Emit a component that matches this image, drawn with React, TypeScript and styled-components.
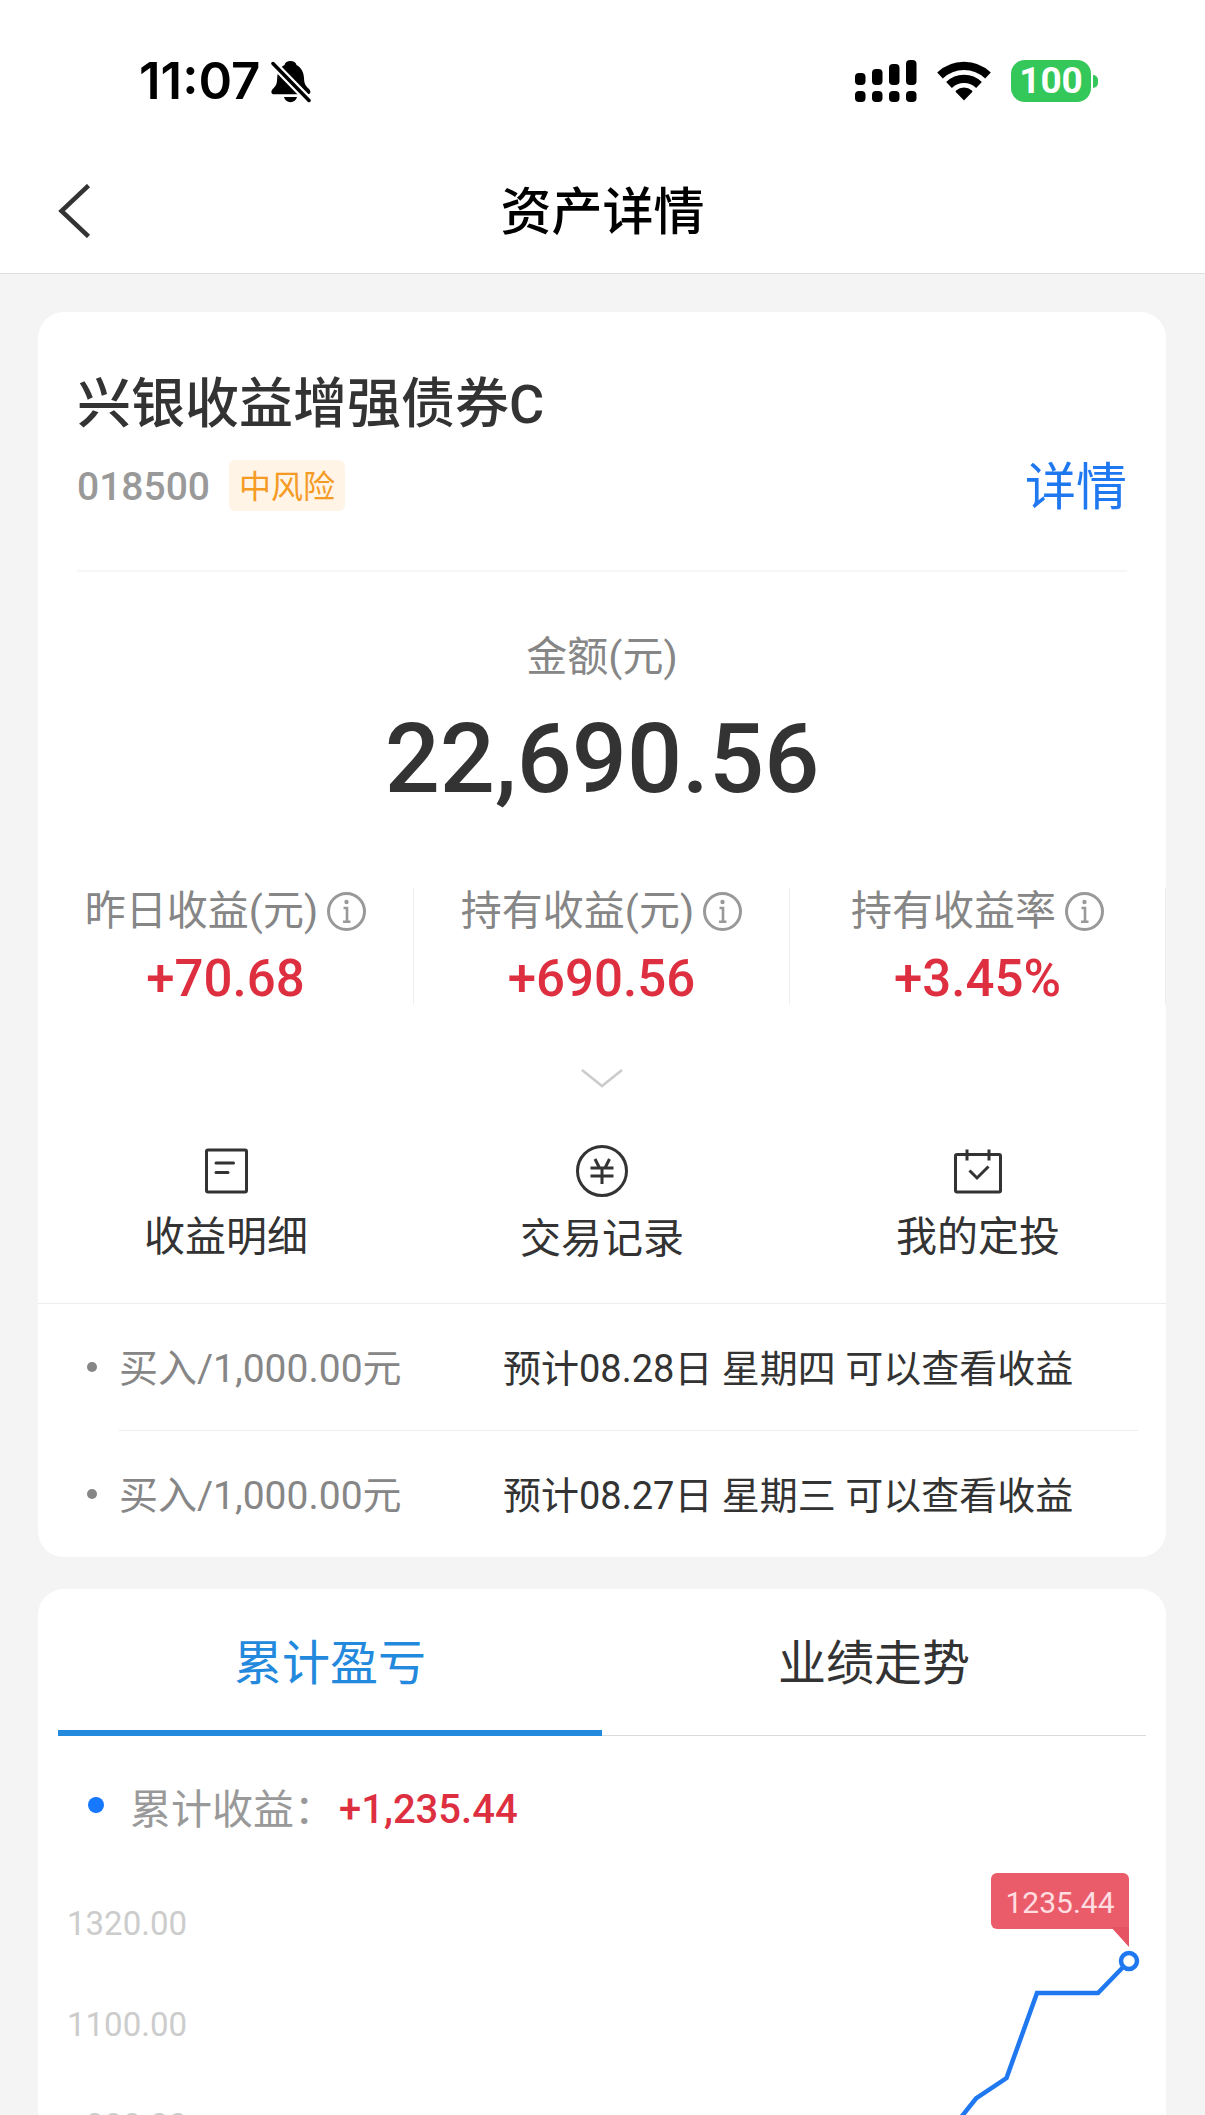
import React, { useState } from "react";
import styled, { createGlobalStyle } from "styled-components";

const color = {
  page: "#f4f4f4",
  card: "#ffffff",
  ink: "#333333",
  muted: "#868686",
  soft: "#999999",
  faint: "#cccccc",
  line: "#eeeeee",
  red: "#dd2f3f",
  blue: "#1f78f0",
  tab: "#2389dc",
};

const GlobalStyle = createGlobalStyle`
  *, *::before, *::after { box-sizing: border-box; }
  body {
    margin: 0;
    background: ${color.page};
    color: ${color.ink};
    font-family: Roboto, "Noto Sans CJK SC", sans-serif;
  }
  button {
    padding: 0;
    border: 0;
    background: none;
    color: inherit;
    font: inherit;
    cursor: pointer;
  }
  h1, h2, p, ul, dl, dd { margin: 0; padding: 0; }
  ul { list-style: none; }
  svg { display: block; flex: none; }
`;

const Screen = styled.div`
  display: flex;
  flex-direction: column;
  height: 100vh;
  overflow: hidden;
`;

/* ---------- top bars ---------- */

const TopBar = styled.header`
  flex: none;
  background: ${color.card};
  border-bottom: 1px solid #dedede;
`;

const StatusBar = styled.div`
  display: flex;
  align-items: center;
  justify-content: space-between;
  height: 162px;
  padding: 0 107px 0 139px;
  color: #000;
`;

const StatusGroup = styled.div<{ $gap: number }>`
  display: flex;
  align-items: center;
  gap: ${(p) => p.$gap}px;
`;

const Clock = styled.time`
  font-family: Inter, sans-serif;
  font-size: 51px;
  font-weight: 600;
  line-height: 60px;
`;

const Battery = styled.div`
  display: flex;
  align-items: center;
  gap: 2px;

  &::after {
    content: "";
    width: 5px;
    height: 13px;
    border-radius: 0 6px 6px 0;
    background: #34c759;
  }
`;

const BatteryLevel = styled.span`
  width: 80px;
  height: 42px;
  border-radius: 14px;
  background: #34c759;
  color: #fff;
  font-size: 37px;
  font-weight: 700;
  line-height: 42px;
  text-align: center;
`;

const NavBar = styled.nav`
  display: grid;
  grid-template-columns: 100px 1fr 100px;
  align-items: center;
  height: 111px;
  padding-bottom: 13px;
`;

const BackButton = styled.button`
  display: flex;
  && { padding-left: 57px; }
`;

const NavTitle = styled.h1`
  && { padding-top: 4px; }
  color: #000;
  font-size: 51px;
  font-weight: 500;
  line-height: 60px;
  text-align: center;
`;

/* ---------- cards ---------- */

const Content = styled.main`
  display: flex;
  flex: 1;
  flex-direction: column;
  gap: 32px;
  min-height: 0;
  padding: 38px 39px 0 38px;
`;

const Card = styled.section<{ $grow?: boolean }>`
  flex: ${(p) => (p.$grow ? "1 1 0" : "none")};
  min-height: 0;
  overflow: hidden;
  border-radius: ${(p) => (p.$grow ? "26px 26px 0 0" : "26px")};
  background: ${color.card};
`;

const FundHead = styled.div`
  margin: 0 39px;
  padding: 60px 0 59px;
  border-bottom: 2px solid #f6f6f6;
`;

const FundName = styled.h2`
  font-size: 54px;
  font-weight: 500;
  line-height: 66px;
`;

const FundMeta = styled.div`
  display: flex;
  align-items: center;
  margin-top: 22px;
  line-height: 47px;

  & > * { padding-top: 4px; }
`;

const FundCode = styled.span`
  color: ${color.soft};
  font-size: 39px;
  font-weight: 500;
`;

const RiskTag = styled.span`
  margin-left: 19px;
  padding-right: 10px;
  padding-left: 10px;
  border-radius: 6px;
  background: #fff4e6;
  color: #f59a23;
  font-size: 32px;
`;

const DetailLink = styled.a`
  margin-left: auto;
  color: ${color.blue};
  font-size: 51px;
  text-decoration: none;
`;

const Balance = styled.div`
  padding-top: 60px;
  text-align: center;
`;

const BalanceLabel = styled.p`
  color: ${color.muted};
  font-size: 41px;
  line-height: 50px;
`;

const BalanceValue = styled.p`
  && { margin-top: 22px; }
  font-size: 97px;
  font-weight: 500;
  line-height: 110px;
`;

const Stats = styled.dl`
  && { margin-top: 74px; }
  display: grid;
  grid-template-columns: repeat(3, 1fr);
`;

const Stat = styled.div`
  border-right: 1px solid ${color.line};
  text-align: center;
`;

const StatLabel = styled.dt`
  display: flex;
  align-items: center;
  justify-content: center;
  gap: 9px;
  padding-top: 1px;
  color: ${color.muted};
  font-size: 41px;
  line-height: 44px;
`;

const StatValue = styled.dd`
  && { margin-top: 20px; }
  color: ${color.red};
  font-size: 51px;
  font-weight: 500;
  line-height: 52px;
`;

const ExpandButton = styled.button`
  && {
    display: block;
    margin: 63px auto 57px;
  }
`;

const Actions = styled.div`
  display: grid;
  grid-template-columns: repeat(3, 1fr);
  align-items: start;
  padding-bottom: 39px;
  border-bottom: 1px solid ${color.line};
`;

const Action = styled.button`
  display: flex;
  flex-direction: column;
  align-items: center;
  gap: 17px;
  && {
    font-size: 41px;
    line-height: 50px;
  }
`;

const OrderItem = styled.li`
  display: flex;
  align-items: center;
  gap: 22px;
  padding: 0 28px 0 49px;

  &::before {
    content: "";
    width: 10px;
    height: 10px;
    border-radius: 50%;
    background: ${color.muted};
  }

  & + & > div { border-top: 1px solid ${color.line}; }
`;

const OrderBody = styled.div`
  display: grid;
  flex: 1;
  grid-template-columns: 384px 1fr;
  padding-top: 4px;
  line-height: 122px;
  white-space: nowrap;
`;

const OrderAmount = styled.span`
  color: ${color.muted};
  font-size: 39px;
`;

const OrderNote = styled.span`
  font-size: 38px;
`;

/* ---------- profit chart ---------- */

const Tabs = styled.div`
  display: grid;
  grid-template-columns: 1fr 1fr;
  margin: 0 20px;
`;

const Tab = styled.button<{ $active: boolean }>`
  && {
    padding: 42px 0 39px;
    color: ${(p) => (p.$active ? color.tab : color.ink)};
    font-size: 48px;
    line-height: 66px;
  }
  box-shadow: inset 0 ${(p) => (p.$active ? `-6px ${color.tab}` : "-1px #d8dcde")};
`;

const Legend = styled.p`
  display: flex;
  align-items: center;
  && { margin: 49px 0 30px 50px; }
  color: ${color.soft};
  font-size: 41px;
  line-height: 50px;

  &::before {
    content: "";
    width: 16px;
    height: 16px;
    margin: 0 26px 10px 0;
    border-radius: 50%;
    background: #1677ff;
  }
`;

const LegendValue = styled.strong`
  margin-left: 4px;
  color: ${color.red};
  font-size: 40px;
  font-weight: 500;
`;

const Chart = styled.div`
  display: grid;
  grid-template-columns: 149px 1fr;
  margin-right: 20px;
`;

const Axis = styled.ul`
  && { padding-top: 8px; }
  color: ${color.faint};
  font-size: 33px;
  line-height: 101px;
  text-align: right;
`;

const Plot = styled.div`
  position: relative;
`;

const Callout = styled.span`
  position: absolute;
  top: 8px;
  right: 17px;
  width: 138px;
  padding-top: 3px;
  border-radius: 6px 6px 0 6px;
  background: #eb5c6a;
  color: #ffdde0;
  font-size: 30px;
  line-height: 53px;
  text-align: center;

  &::after {
    content: "";
    position: absolute;
    top: 54px;
    right: 0;
    width: 18px;
    height: 20px;
    background: #e65362;
    clip-path: polygon(0 0, 100% 0, 100% 100%);
  }
`;

/* ---------- icons ---------- */

const BellOffIcon = () => (
  <svg width="40" height="43" viewBox="0 0 40 43" aria-hidden="true">
    <path
      d="M19.500 1c3.200 0 5.400 1.600 6 4 4.800 2.600 7.200 7 7.500 13 .2 5.200 1.200 7.400 4 10 1.600 1.500 2.400 2.600 2.400 4 0 1.700-1.200 2.300-3.400 2.300H3.400C1.300 34.300.4 33.500.4 32c0-1.500.8-2.500 2.300-4C5.400 25.400 6 23 6.200 18c.3-6 2.600-10.400 7.300-13 .6-2.400 2.800-4 6-4z"
      fill="#000"
    />
    <path d="M13 37h13c-.8 3.300-3.200 5.200-6.500 5.200S13.800 40.300 13 37z" fill="#000" />
    <path d="M2 3.500l38 39" stroke="#fff" strokeWidth="8" />
    <path d="M2 3.500l36 37" stroke="#000" strokeWidth="3.500" strokeLinecap="round" />
  </svg>
);

const SignalIcon = () => (
  <svg width="62" height="42" viewBox="0 0 62 42" aria-hidden="true">
    {[13, 9, 4, 0].map((top, i) => (
      <g key={top}>
        <rect x={i * 17} y={top} width="10.500" height={25 - top} rx="4" />
        <rect x={i * 17} y="31" width="10.500" height="11" rx="4" />
      </g>
    ))}
  </svg>
);

const WifiIcon = () => (
  <svg width="54" height="40" viewBox="0 0 54 40" aria-hidden="true">
    <g fill="none" stroke="#000" strokeWidth="8.200">
      <path d="M3 14.500A34.700 34.700 0 0 1 51 14.500" />
      <path d="M12 24A21.500 21.500 0 0 1 42 24" />
    </g>
    <path d="M27 39.500L19 31.300a1.200 1.200 0 0 1 .1-1.800 12 12 0 0 1 15.800 0 1.200 1.200 0 0 1 .1 1.800z" />
  </svg>
);

const BackIcon = () => (
  <svg width="35" height="54" viewBox="0 0 35 54" fill="none" aria-hidden="true">
    <path d="M31.500 1.500L4.500 27l27 25.500" stroke="#333" strokeWidth="4.500" />
  </svg>
);

const InfoIcon = () => (
  <svg width="39" height="39" viewBox="0 0 39 39" fill="none" aria-hidden="true">
    <circle cx="19.500" cy="19.500" r="18" stroke="#999" strokeWidth="3" />
    <circle cx="19.500" cy="10" r="2.200" fill="#999" />
    <path d="M16.500 16H20v13.500M16 29.800h7.500" stroke="#999" strokeWidth="2.600" />
  </svg>
);

const ChevronDownIcon = () => (
  <svg width="44" height="20" viewBox="0 0 44 20" fill="none" aria-hidden="true">
    <path d="M2 2l20 16L42 2" stroke="#ccc" strokeWidth="2.600" />
  </svg>
);

const LedgerIcon = () => (
  <svg width="50" height="50" viewBox="0 0 50 50" fill="none" stroke="#333" strokeWidth="3" aria-hidden="true">
    <rect x="5.500" y="5" width="40" height="42" rx="1.500" />
    <path d="M15 18h17.500M15 27.500h12" strokeLinecap="round" />
  </svg>
);

const YuanIcon = () => (
  <svg width="52" height="52" viewBox="0 0 52 52" fill="none" stroke="#333" strokeWidth="3" aria-hidden="true">
    <circle cx="26" cy="26" r="24.500" />
    <path d="M19 14l4.500 9M33.500 14L29 23M14.500 23h23M14.500 31h23M26 23v16" />
  </svg>
);

const CalendarCheckIcon = () => (
  <svg width="50" height="50" viewBox="0 0 50 50" fill="none" stroke="#333" strokeWidth="3" aria-hidden="true">
    <rect x="2.500" y="9.500" width="45" height="37.500" rx="1.500" />
    <path d="M14 4.500v11M36 4.500v11M16.500 25.500l7.500 7.500 11.500-11.500" />
  </svg>
);

const ProfitLine = () => (
  <svg
    width="100%"
    height="260"
    viewBox="0 0 260 260"
    preserveAspectRatio="xMaxYMin meet"
    fill="none"
    stroke="#1f78f0"
    strokeWidth="4.500"
    role="img"
    aria-label="累计盈亏"
  >
    <path d="M66 265L76 251 90 233.500 120.500 213 151 128h61l31-32" />
    <circle cx="243" cy="96" r="8" fill="#fff" />
  </svg>
);

/* ---------- data ---------- */

const stats = [
  { label: "昨日收益(元)", value: "+70.68" },
  { label: "持有收益(元)", value: "+690.56" },
  { label: "持有收益率", value: "+3.45%" },
];

const actions = [
  { label: "收益明细", Icon: LedgerIcon },
  { label: "交易记录", Icon: YuanIcon },
  { label: "我的定投", Icon: CalendarCheckIcon },
];

const orders = [
  { amount: "买入/1,000.00元", note: "预计08.28日 星期四 可以查看收益" },
  { amount: "买入/1,000.00元", note: "预计08.27日 星期三 可以查看收益" },
];

const tabs = ["累计盈亏", "业绩走势"];
const ticks = ["1320.00", "1100.00", "880.00"];

export default function App() {
  const [activeTab, setActiveTab] = useState(tabs[0]);

  return (
    <Screen>
      <GlobalStyle />
      <TopBar>
        <StatusBar>
          <StatusGroup $gap={11}>
            <Clock>11:07</Clock>
            <BellOffIcon />
          </StatusGroup>
          <StatusGroup $gap={20}>
            <SignalIcon />
            <WifiIcon />
            <Battery>
              <BatteryLevel>100</BatteryLevel>
            </Battery>
          </StatusGroup>
        </StatusBar>
        <NavBar>
          <BackButton aria-label="返回">
            <BackIcon />
          </BackButton>
          <NavTitle>资产详情</NavTitle>
        </NavBar>
      </TopBar>

      <Content>
        <Card>
          <FundHead>
            <FundName>兴银收益增强债券C</FundName>
            <FundMeta>
              <FundCode>018500</FundCode>
              <RiskTag>中风险</RiskTag>
              <DetailLink href="#detail">详情</DetailLink>
            </FundMeta>
          </FundHead>

          <Balance>
            <BalanceLabel>金额(元)</BalanceLabel>
            <BalanceValue>22,690.56</BalanceValue>
          </Balance>

          <Stats>
            {stats.map((s) => (
              <Stat key={s.label}>
                <StatLabel>
                  {s.label}
                  <InfoIcon />
                </StatLabel>
                <StatValue>{s.value}</StatValue>
              </Stat>
            ))}
          </Stats>

          <ExpandButton aria-label="展开">
            <ChevronDownIcon />
          </ExpandButton>

          <Actions>
            {actions.map(({ label, Icon }) => (
              <Action key={label}>
                <Icon />
                {label}
              </Action>
            ))}
          </Actions>

          <ul>
            {orders.map((o) => (
              <OrderItem key={o.note}>
                <OrderBody>
                  <OrderAmount>{o.amount}</OrderAmount>
                  <OrderNote>{o.note}</OrderNote>
                </OrderBody>
              </OrderItem>
            ))}
          </ul>
        </Card>

        <Card $grow>
          <Tabs role="tablist">
            {tabs.map((t) => (
              <Tab
                key={t}
                role="tab"
                aria-selected={t === activeTab}
                $active={t === activeTab}
                onClick={() => setActiveTab(t)}
              >
                {t}
              </Tab>
            ))}
          </Tabs>
          <Legend>
            累计收益：
            <LegendValue>+1,235.44</LegendValue>
          </Legend>
          <Chart>
            <Axis>
              {ticks.map((t) => (
                <li key={t}>{t}</li>
              ))}
            </Axis>
            <Plot>
              <ProfitLine />
              <Callout>1235.44</Callout>
            </Plot>
          </Chart>
        </Card>
      </Content>
    </Screen>
  );
}
